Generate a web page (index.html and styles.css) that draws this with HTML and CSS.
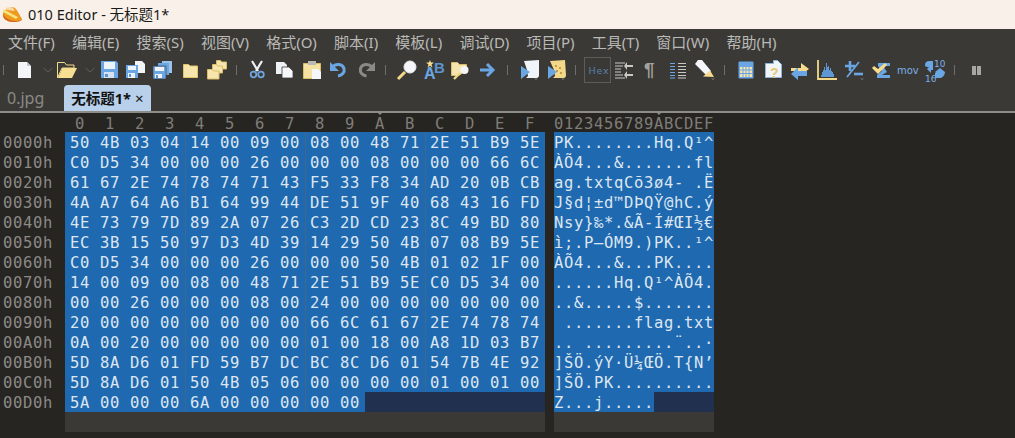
FILE: index.html
```html
<!DOCTYPE html>
<html lang="zh">
<head>
<meta charset="utf-8">
<title>010 Editor</title>
<link rel="stylesheet" href="styles.css">
</head>
<body>
<header class="titlebar">
  <svg width="22" height="18" viewBox="2 6 22 18" class="appicon"><path d="M3 13C6 8 12 6 15 8c3 3 5 8 7 11 0 2-4 3-9 3-5 0-11-3-10-9z" fill="#ee9a1e"/><path d="M3 14c2 4 7 7 13 7 2 0 4 0 6-2 0 2-4 3-9 3-5 0-11-3-10-8z" fill="#d9641a"/><path d="M3 9l15 8-2 2L3 12z" fill="#f6e27c"/><path d="M5 8c3-1 6-1 8 0l2 3-8-1z" fill="#fbd9a8"/></svg>
  <span class="apptitle">010 Editor - 无标题1*</span>
</header>
<nav class="menubar">
  <span>文件(F)</span><span>编辑(E)</span><span>搜索(S)</span><span>视图(V)</span><span>格式(O)</span><span>脚本(I)</span><span>模板(L)</span><span>调试(D)</span><span>项目(P)</span><span>工具(T)</span><span>窗口(W)</span><span>帮助(H)</span>
</nav>
<div class="toolbar">
  <svg width="10" height="28" viewBox="0 56 10 28"><path d="M3.500 65v10" class="sep"/></svg>
  <svg width="28" height="28" viewBox="10 56 28 28"><path d="M18 62h9l4 4v12H18z" fill="#f3f5f9"/><path d="M27 62v4h4" fill="#bfc6d0"/></svg>
  <svg width="17" height="28" viewBox="38 56 17 28"><path d="M43.500 68l4.500 4 4.500-4" class="chev"/></svg>
  <svg width="24" height="28" viewBox="55 56 24 28"><path d="M57.500 62.500h7l2 2.500h7.500v3H62l-4.500 10z" fill="#3d3b37" stroke="#f4dc8e"/><path d="M58 78l4.500-10H77l-5 10z" fill="#f7df92"/></svg>
  <svg width="18" height="28" viewBox="79 56 18 28"><path d="M85.500 68l4.500 4 4.500-4" class="chev"/></svg>
  <svg width="26" height="28" viewBox="97 56 26 28"><path d="M101 61h15l2 2v15h-17z" fill="#6ba6e4"/><path d="M104 62h11v7h-11z" fill="#eef3fa"/><path d="M104 72h10v6h-10z" fill="#d6e2f0"/><path d="M105 74h3v3h-3z" fill="#5d93cf"/></svg>
  <svg width="27" height="28" viewBox="123 56 27 28"><path d="M135 61h7l3 3v9h-10z" fill="#f1f4f9"/><path d="M126 65h12v13h-12z" fill="#6ba6e4"/><path d="M128 66h8v4h-8z" fill="#eef3fa"/><path d="M128 73h7v5h-7z" fill="#eef3fa"/><path d="M129 74h2v3h-2z" fill="#5d93cf"/></svg>
  <svg width="27" height="28" viewBox="150 56 27 28"><path d="M162 61h10v12h-3V64h-7z" fill="#9bc2ea"/><path d="M158 63h11v12h-11z" fill="#6ba6e4"/><path d="M153 66h13v13h-13z" fill="#6ba6e4" stroke="#3d3b37" stroke-width=".6"/><path d="M155 67h9v4h-9z" fill="#eef3fa"/><path d="M155 74h7v4h-7z" fill="#eef3fa"/><path d="M156 75h2v3h-2z" fill="#5d93cf"/></svg>
  <svg width="27" height="28" viewBox="177 56 27 28"><path d="M183.500 64.500h5l1.500 1.500h7.500v11.500h-14z" fill="#f6e6ae" stroke="#e2c56b"/></svg>
  <svg width="27" height="28" viewBox="204 56 27 28"><path d="M216.500 60.500h4l1 1.500h5v7h-10z" fill="#f6e6ae" stroke="#d9bd68"/><path d="M212.500 64.500h4l1 1.500h5v7h-10z" fill="#f6e6ae" stroke="#d9bd68"/><path d="M207.500 69.500h5l1 1.500h5.500v8h-11.500z" fill="#f6e6ae" stroke="#d9bd68"/></svg>
  <svg width="12" height="28" viewBox="231 56 12 28"><path d="M236.500 65v10" class="sep"/></svg>
  <svg width="28" height="28" viewBox="243 56 28 28"><path d="M252 61l6 10M262 61l-6 10" stroke="#eef1f5" stroke-width="2.200" fill="none"/><circle cx="253.500" cy="74.500" r="2.800" fill="none" stroke="#6fa4dc" stroke-width="1.800"/><circle cx="261" cy="74.500" r="2.800" fill="none" stroke="#6fa4dc" stroke-width="1.800"/></svg>
  <svg width="27" height="28" viewBox="271 56 27 28"><path d="M276 62h8l3 3v9h-11z" fill="#eef1f6"/><path d="M282 67h7l4 4v7h-11z" fill="#f5f7fa" stroke="#3d3b37" stroke-width=".8"/></svg>
  <svg width="26" height="28" viewBox="298 56 26 28"><path d="M303.500 63.500h17v15h-17z" fill="#f5e2a0" stroke="#d9bd68"/><path d="M308 61h8v4h-8z" fill="#b9b9b5"/><path d="M312 69h6l3 3v7h-9z" fill="#f4f6fa"/></svg>
  <svg width="28" height="28" viewBox="324 56 28 28"><path d="M332.500 67c3-3.500 10-3.500 11.500 1.500 1 4-2 7-6 7.500" fill="none" stroke="#6ba6e4" stroke-width="3"/><path d="M330 62v9h9z" fill="#6ba6e4"/></svg>
  <svg width="27" height="28" viewBox="352 56 27 28"><path d="M372 67c-3-3.500-10-3.500-11.500 1.500-1 4 2 7 6 7.500" fill="none" stroke="#8b8a87" stroke-width="3"/><path d="M375 62v9h-9z" fill="#8b8a87"/></svg>
  <svg width="13" height="28" viewBox="379 56 13 28"><path d="M385.500 65v10" class="sep"/></svg>
  <svg width="28" height="28" viewBox="392 56 28 28"><circle cx="410" cy="67" r="6" fill="#f4f6fa" stroke="#e9ecf0"/><path d="M405 72l-7 7" stroke="#f2d98a" stroke-width="3"/></svg>
  <svg width="27" height="28" viewBox="420 56 27 28"><path d="M430 60l1 2.500h3l-2.500 2 1 3-2.500-1.800-2.500 1.800 1-3-2.500-2h3z" fill="#f7df92"/><text x="434" y="73" class="ab">B</text><text x="424" y="79" class="ab abfront">A</text></svg>
  <svg width="27" height="28" viewBox="447 56 27 28"><path d="M451.500 62.500h6l2 2h7v6l-8 5h-7z" fill="#f6e6ae" stroke="#d9bd68"/><circle cx="464.500" cy="70" r="4" fill="#f3f5f9"/><path d="M460 73l-6 6" stroke="#f2d98a" stroke-width="2.400"/></svg>
  <svg width="26" height="28" viewBox="474 56 26 28"><path d="M480 70h13M487 64l6 6-6 6" fill="none" stroke="#6ba6e4" stroke-width="3"/></svg>
  <svg width="14" height="28" viewBox="500 56 14 28"><path d="M507.500 65v10" class="sep"/></svg>
  <svg width="27" height="28" viewBox="514 56 27 28"><path d="M524 61l15-1 0 15c0 3-2 3-4 3h-9l2-2-1-6z" fill="#f1f4f9"/><path d="M521 66l9 6-9 7z" fill="#6ba6e4"/><path d="M534 78.500h4l-2 1.500z" fill="#777"/></svg>
  <svg width="27" height="28" viewBox="541 56 27 28"><path d="M550 61l15-1 1 15c0 3-2 3-4 3h-9l2-2-1-6z" fill="#f3d88a"/><circle cx="556" cy="66" r="1" fill="#b48a32"/><circle cx="560" cy="68" r="1" fill="#b48a32"/><circle cx="557" cy="71" r="1" fill="#b48a32"/><circle cx="561" cy="73" r="1" fill="#b48a32"/><path d="M548 66l9 6-9 7z" fill="#6ba6e4"/><path d="M561 78.500h4l-2 1.500z" fill="#777"/></svg>
  <svg width="16" height="28" viewBox="568 56 16 28"><path d="M575.500 65v10" class="sep"/></svg>
  <svg width="27" height="28" viewBox="584 56 27 28"><rect x="584.500" y="57.500" width="26" height="25" fill="none" stroke="#5e5d5a"/><text x="588.500" y="74" class="ico-hex">Hex</text></svg>
  <svg width="26" height="28" viewBox="611 56 26 28"><path d="M615 63h10M615 66h8M615 69h6M615 72h6M615 75h8M615 78h10" stroke="#c8c8c5" stroke-width="1.200"/><path d="M627 66h6M627 75h6" stroke="#c8c8c5" stroke-width="2"/><path d="M627 62v8l-3-4zM627 71v8l-3-4z" fill="#c8c8c5"/></svg>
  <svg width="27" height="28" viewBox="637 56 27 28"><text x="644" y="76" class="pil">¶</text></svg>
  <svg width="27" height="28" viewBox="664 56 27 28"><path d="M670 63.500h5M670 66.500h5M670 69.500h5M670 72.500h5M670 75.500h5M670 78h5" stroke="#6ba6e4" stroke-width="1.200"/><path d="M678 63.500h8M678 66.500h8M678 69.500h8M678 72.500h8M678 75.500h8M678 78h8" stroke="#c8c8c5" stroke-width="1.200"/></svg>
  <svg width="27" height="28" viewBox="691 56 27 28"><path d="M695 64l3-4h4l9 11-4 5z" fill="#f4f6fa"/><path d="M703 76.500l7-6 4 6.500z" fill="#f6dc8c"/><path d="M711 78.500h4l-2 1.500z" fill="#777"/></svg>
  <svg width="15" height="28" viewBox="718 56 15 28"><path d="M724.500 65v10" class="sep"/></svg>
  <svg width="27" height="28" viewBox="733 56 27 28"><rect x="738.500" y="61.500" width="15" height="17" rx="1" fill="#6ba6e4"/><path d="M740 67h12v10h-12z" fill="#f6e6ae"/><path d="M743 67v10M746 67v10M749 67v10M740 70h12M740 73.500h12" stroke="#6ba6e4"/></svg>
  <svg width="27" height="28" viewBox="760 56 27 28"><path d="M765.500 63.500h8v-3h4l4 4v13h-16z" fill="#f1f4f9" stroke="#8fb5de"/><text x="770" y="78" class="q">?</text></svg>
  <svg width="27" height="28" viewBox="787 56 27 28"><path d="M791 68h10v-5l8 6-8 6v-4h-10z" fill="#f6dc8c"/><path d="M807 71h-9v-3h-1l-6 6 7 6v-4h9z" fill="#6ba6e4"/></svg>
  <svg width="27" height="28" viewBox="814 56 27 28"><path d="M818 60v19h19" fill="none" stroke="#f2d98a" stroke-width="1.800"/><path d="M821 77v-2h1v-3h1v-2h1v-3h1v3h1v-7h1v4h1v-1h1v4h1v-2h1v3h1v1h1v2h1v3z" fill="#5f97d4"/></svg>
  <svg width="26" height="28" viewBox="841 56 26 28"><path d="M845 66h10M850 61v10" stroke="#6ba6e4" stroke-width="2.600"/><path d="M847 77l12-15" stroke="#6ba6e4" stroke-width="1.800"/><path d="M854 74h9" stroke="#6ba6e4" stroke-width="2.600"/><path d="M860 78.500h4l-2 1.500z" fill="#777"/></svg>
  <svg width="27" height="28" viewBox="867 56 27 28"><path d="M878 63h12v3h-7l4 6-5 3h8v3h-13v-3l5-4-4-5z" fill="#6ba6e4"/><path d="M872 68l2-2 4 3 7-6 2 2-9 9z" fill="#f6dc8c"/></svg>
  <svg width="26" height="28" viewBox="894 56 26 28"><text x="897" y="74" class="mov">mov</text></svg>
  <svg width="28" height="28" viewBox="920 56 28 28"><path d="M925 65c0-3 2-4 4-4h4v9h-2v3l-4-4 2-2c-2 0-4 0-4-2z" fill="#6ba6e4"/><path d="M945 72c0 3-2 5-4 6h-6v-5h1l-1-1 5-4 5 4z" fill="#6ba6e4"/><text x="934" y="67" class="cv">10</text><text x="925" y="82" class="cv">16</text></svg>
  <svg width="14" height="28" viewBox="948 56 14 28"><path d="M954.500 65v10" class="sep"/></svg>
  <svg width="27" height="28" viewBox="962 56 27 28"><path d="M972 66h4v9h-4zM977 66h4v9h-4z" fill="#a7a6a3"/></svg>
</div>
<div class="tabs">
  <span class="tab">0.jpg</span>
  <span class="tab active"><b>无标题1*</b><i>×</i></span>
</div>
<main class="editor">
  <div class="addr">
    <div class="head"></div>
    <div class="line">0000h</div>
    <div class="line">0010h</div>
    <div class="line">0020h</div>
    <div class="line">0030h</div>
    <div class="line">0040h</div>
    <div class="line">0050h</div>
    <div class="line">0060h</div>
    <div class="line">0070h</div>
    <div class="line">0080h</div>
    <div class="line">0090h</div>
    <div class="line">00A0h</div>
    <div class="line">00B0h</div>
    <div class="line">00C0h</div>
    <div class="line">00D0h</div>
  </div>
  <div class="hexpane">
    <div class="head">0  1  2  3  4  5  6  7  8  9  <span class="mark">A</span>  B  C  D  E  F</div>
    <div class="row">50 4B 03 04 14 00 09 00 08 00 48 71 2E 51 B9 5E</div>
    <div class="row">C0 D5 34 00 00 00 26 00 00 00 08 00 00 00 66 6C</div>
    <div class="row">61 67 2E 74 78 74 71 43 F5 33 F8 34 AD 20 0B CB</div>
    <div class="row">4A A7 64 A6 B1 64 99 44 DE 51 9F 40 68 43 16 FD</div>
    <div class="row">4E 73 79 7D 89 2A 07 26 C3 2D CD 23 8C 49 BD 80</div>
    <div class="row">EC 3B 15 50 97 D3 4D 39 14 29 50 4B 07 08 B9 5E</div>
    <div class="row">C0 D5 34 00 00 00 26 00 00 00 50 4B 01 02 1F 00</div>
    <div class="row">14 00 09 00 08 00 48 71 2E 51 B9 5E C0 D5 34 00</div>
    <div class="row">00 00 26 00 00 00 08 00 24 00 00 00 00 00 00 00</div>
    <div class="row">20 00 00 00 00 00 00 00 66 6C 61 67 2E 74 78 74</div>
    <div class="row">0A 00 20 00 00 00 00 00 01 00 18 00 A8 1D 03 B7</div>
    <div class="row">5D 8A D6 01 FD 59 B7 DC BC 8C D6 01 54 7B 4E 92</div>
    <div class="row">5D 8A D6 01 50 4B 05 06 00 00 00 00 01 00 01 00</div>
    <div class="row last"><span class="sel">5A 00 00 00 6A 00 00 00 00 00</span></div>
    <div class="foot"></div>
  </div>
  <div class="textpane">
    <div class="head">0123456789<span class="mark">A</span>BCDEF</div>
    <div class="row">PK........Hq.Q¹^</div>
    <div class="row">ÀÕ4...&amp;.......fl</div>
    <div class="row">ag.txtqCõ3ø4- .Ë</div>
    <div class="row">J§d¦±d™DÞQŸ@hC.ý</div>
    <div class="row">Nsy}‰*.&amp;Ã-Í#ŒI½€</div>
    <div class="row">ì;.P—ÓM9.)PK..¹^</div>
    <div class="row">ÀÕ4...&amp;...PK....</div>
    <div class="row">......Hq.Q¹^ÀÕ4.</div>
    <div class="row">..&amp;.....$.......</div>
    <div class="row"> .......flag.txt</div>
    <div class="row">.. .........¨..·</div>
    <div class="row">]ŠÖ.ýY·Ü¼ŒÖ.T{N’</div>
    <div class="row">]ŠÖ.PK..........</div>
    <div class="row last"><span class="sel">Z...j.....</span></div>
    <div class="foot"></div>
  </div>
</main>
</body>
</html>
```
FILE: styles.css
```css
* { box-sizing: border-box; }
html, body { margin: 0; height: 100%; overflow: hidden; }
body {
  --grid: linear-gradient(90deg, #1f69b0 120px, #41678f 120px 121px, #1f69b0 121px 240px, #41678f 240px 241px, #1f69b0 241px 360px, #41678f 360px 361px, #1f69b0 361px);
  width: 1015px; height: 438px; background: #3b3936; font-family: "Noto Sans", "Noto Sans CJK SC", sans-serif;
}

.titlebar { height: 29px; background: #f9f1e9; display: flex; align-items: center; color: #1a1a1a; }
.appicon { margin-left: 2px; }
.apptitle { margin-left: 4px; font-size: 14.5px; line-height: 29px; }

.menubar { height: 27px; display: flex; gap: 17.200px; padding: 0 0 2px 8px; align-items: center; color: #b9b9b6; font-size: 15px; }
.menubar span { white-space: nowrap; }

.toolbar { height: 28px; display: flex; }
.toolbar svg { flex: none; display: block; overflow: visible; }
.sep { stroke: #6f6e6a; stroke-width: 1; }
.chev { fill: none; stroke: #5f5e5a; stroke-width: 1; }
.ab { font: 700 15px "Liberation Sans", sans-serif; fill: #5d94cf; }
.abfront { fill: #6ba6e4; font-size: 16px; }
.ico-hex { font: 9.500px "DejaVu Sans", sans-serif; fill: #5a80aa; letter-spacing: .8px; }
.pil { font: 700 19px "Liberation Sans", sans-serif; fill: #a3a29f; }
.q { font: 700 14px "Liberation Sans", sans-serif; fill: #e6c86e; }
.mov { font: 10px "DejaVu Sans", sans-serif; fill: #7ab0e6; }
.cv { font: 9px "DejaVu Sans", sans-serif; fill: #7ab0e6; }

.tabs { height: 27px; display: flex; padding-left: 7px; gap: 20px; align-items: flex-end; }
.tab { color: #8b8a87; font-size: 16px; line-height: 26px; }
.tab.active { width: 87px; height: 26px; background: #b9d0ea; color: #111; border-radius: 4px 4px 0 0; padding-left: 7px; font-size: 14.500px; display: flex; align-items: center; gap: 4px; }
.tab b { font-weight: 700; }
.tab i { font-style: normal; font-size: 15px; }

.editor { height: 327px; border-top: 2px solid #8e8c88; background: #272522; display: flex; font: 15.500px/23px "DejaVu Sans Mono", monospace; letter-spacing: .67px; }
.head { height: 19px; line-height: 19px; padding-top: 2px; color: #7f7d79; white-space: pre; }
.line { height: 20px; }
.addr { width: 65px; padding-left: 3px; color: #8c8a86; }
.hexpane { width: 480px; }
.textpane { width: 160px; margin-left: 9px; }
.hexpane .head { padding-left: 10px; }
.mark { position: relative; }
.mark::before { content: ""; position: absolute; left: 2px; top: -3px; border: 3px solid transparent; border-top-color: #8e8c88; }

.row { height: 20px; background: #1f69b0; color: #dde6f0; white-space: pre; }
.hexpane .row { padding-left: 5px; background: var(--grid); }
.row.last, .hexpane .row.last { background: #22304f; padding-left: 0; }
.sel { display: block; height: 20px; background: #1f69b0; }
.hexpane .sel { width: 300px; padding-left: 5px; background: var(--grid); }
.textpane .sel { width: 100px; }
.foot { height: 20px; background: #3b3936; }
```
